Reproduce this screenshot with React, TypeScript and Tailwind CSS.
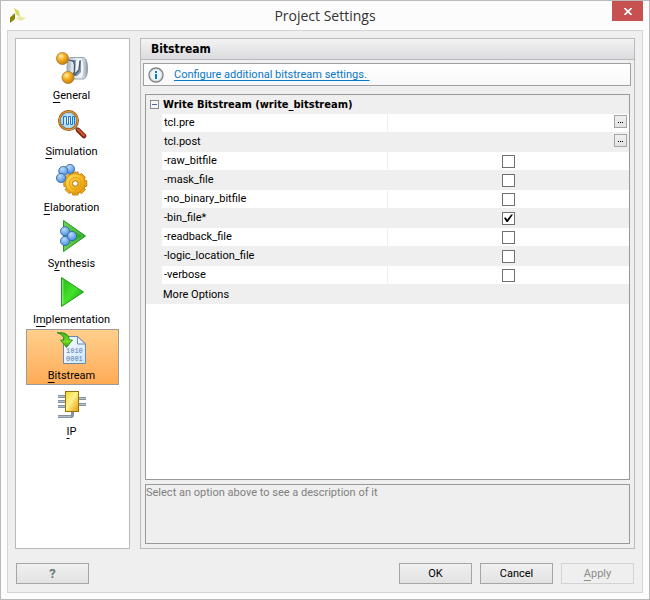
import { useState, type ReactNode } from 'react';

function GeneralIcon() {
  return (
    <svg viewBox="0 0 32 32" className="size-8" aria-hidden="true">
      <defs>
        <radialGradient id="orb" cx="0.38" cy="0.32" r="0.7">
          <stop offset="0" stopColor="#fff0b0" />
          <stop offset="0.4" stopColor="#f8b62c" />
          <stop offset="1" stopColor="#c87804" />
        </radialGradient>
        <linearGradient id="steel" x1="0" x2="1" y1="0" y2="0">
          <stop offset="0" stopColor="#a9b7c3" />
          <stop offset="0.45" stopColor="#e3eaf0" />
          <stop offset="0.75" stopColor="#f4f7fa" />
          <stop offset="1" stopColor="#8494a3" />
        </linearGradient>
      </defs>
      <path d="M14 5.500H28Q31.500 8 31.500 16.500Q31.500 25 28 27H14Q11 24 11 16Q11 8 14 5.500z" fill="url(#steel)" stroke="#7f909f" strokeWidth="0.8" />
      <path d="M26 6Q28.500 10 28.500 16.500Q28.500 23 26 26.500" fill="none" stroke="#b3c0cb" />
      <path d="M16 8H25V20L21 24H16z" fill="#8595a4" />
      <path d="M20 8H23.500L22.500 18L19 21z" fill="#eef3f7" />
      <path d="M16.500 10V19L13.500 23" fill="none" stroke="#dfe7ee" strokeWidth="2.600" />
      <path d="M11 7.500L18 9.500V12M18.500 12V20.500L15.500 23M24 9L23 18L18 23.500" fill="none" stroke="#465868" strokeWidth="1.200" />
      <circle cx="6.500" cy="6.500" r="6" fill="url(#orb)" stroke="#a97420" strokeWidth="0.8" />
      <circle cx="12" cy="25.500" r="6" fill="url(#orb)" stroke="#a97420" strokeWidth="0.8" />
    </svg>
  );
}

function SimulationIcon() {
  return (
    <svg viewBox="0 0 32 32" className="size-8" aria-hidden="true">
      <defs>
        <radialGradient id="lens">
          <stop offset="0" stopColor="#f0fdff" />
          <stop offset="1" stopColor="#8ccdf5" />
        </radialGradient>
      </defs>
      <path d="M19 19L23 23" stroke="#8995a0" strokeWidth="3" />
      <path d="M22 22L28 28" stroke="#7c2815" strokeWidth="4.600" strokeLinecap="round" />
      <path d="M22 21.500L28 27.500" stroke="#cf5734" strokeWidth="2" strokeLinecap="round" />
      <circle cx="12.500" cy="12.500" r="9.200" fill="url(#lens)" stroke="#8e551b" strokeWidth="2.600" />
      <circle cx="12.500" cy="12.500" r="9.200" fill="none" stroke="#de9538" strokeWidth="1.200" />
      <path d="M6 16.500H7.500V8.500H10.500V16.500H12.500V8.500H14.500V16.500H16.500V8.500H18.500V16.500" fill="none" stroke="#2875bd" strokeWidth="1" />
    </svg>
  );
}

const TEETH = [0, 45, 90, 135, 180, 225, 270, 315];

function ElaborationIcon() {
  return (
    <svg viewBox="0 0 32 32" className="size-8" aria-hidden="true">
      <defs>
        <radialGradient id="bead" cx="0.4" cy="0.3" r="0.75">
          <stop offset="0" stopColor="#b9dcff" />
          <stop offset="1" stopColor="#4589dc" />
        </radialGradient>
        <linearGradient id="gold" x1="0" x2="1" y1="0" y2="1">
          <stop offset="0" stopColor="#ffe36a" />
          <stop offset="0.5" stopColor="#f8bd22" />
          <stop offset="1" stopColor="#dd8e05" />
        </linearGradient>
      </defs>
      {TEETH.map((angle) => (
        <path key={angle} d="M15.800 11L16.600 8H22L22.800 11z" transform={`rotate(${angle} 19.300 19.500)`} fill="#f2ae18" stroke="#b87408" strokeWidth="0.8" />
      ))}
      <circle cx="19.300" cy="19.500" r="9.800" fill="url(#gold)" stroke="#c7810b" strokeWidth="0.6" />
      <circle cx="19.300" cy="19.500" r="6" fill="none" stroke="#e3a01a" strokeWidth="1" />
      <circle cx="19.300" cy="19.500" r="2.800" fill="#fff" stroke="#ae6d08" />
      <g fill="url(#bead)" stroke="#315f98" strokeWidth="0.8">
        <circle cx="14" cy="5" r="4.600" />
        <circle cx="7.300" cy="7" r="4.600" />
        <circle cx="5" cy="14" r="4.600" />
      </g>
    </svg>
  );
}

function SynthesisIcon() {
  return (
    <svg viewBox="0 0 32 32" className="size-8" aria-hidden="true">
      <defs>
        <linearGradient id="synthGreen" x1="0" x2="1">
          <stop offset="0" stopColor="#6fd055" />
          <stop offset="1" stopColor="#12a00b" />
        </linearGradient>
      </defs>
      <path d="M7.500 0.500L29.500 16L7.500 31.500z" fill="url(#synthGreen)" stroke="#249a1f" strokeLinejoin="round" />
      <path d="M9 3.500L27 16L9 28.500" fill="none" stroke="#7fd46c" strokeWidth="0.7" />
      <g fill="url(#bead)" stroke="#2c66a5" strokeWidth="0.8">
        <circle cx="9" cy="11.300" r="4.600" />
        <circle cx="9" cy="21" r="4.600" />
        <circle cx="16" cy="16" r="4.600" />
      </g>
    </svg>
  );
}

function ImplementationIcon() {
  return (
    <svg viewBox="0 0 32 32" className="size-8" aria-hidden="true">
      <defs>
        <linearGradient id="runGreen" x1="0" x2="1" y1="0" y2="1">
          <stop offset="0" stopColor="#25b916" />
          <stop offset="0.5" stopColor="#43e22b" />
          <stop offset="1" stopColor="#119709" />
        </linearGradient>
      </defs>
      <path d="M5.500 1.500L27.500 16L5.500 30.500z" fill="url(#runGreen)" stroke="#239a1d" strokeLinejoin="round" />
      <path d="M6.800 28V3.500" stroke="#9af08a" />
    </svg>
  );
}

function BitstreamIcon() {
  return (
    <svg viewBox="0 0 32 32" className="size-8" aria-hidden="true">
      <defs>
        <linearGradient id="page" x1="0" x2="1" y1="0" y2="1">
          <stop offset="0" stopColor="#fff" />
          <stop offset="1" stopColor="#c9e5fb" />
        </linearGradient>
        <linearGradient id="arrowGreen" x1="0" x2="0" y1="0" y2="1">
          <stop offset="0" stopColor="#36b51f" />
          <stop offset="0.6" stopColor="#75dc22" />
          <stop offset="1" stopColor="#29980d" />
        </linearGradient>
      </defs>
      <path d="M7.500 4.500H21.500L29.500 12V31.500H7.500z" fill="url(#page)" stroke="#6d87b0" />
      <path d="M21.500 4.500V12H29.500z" fill="#e9f5ff" stroke="#6d87b0" strokeLinejoin="round" />
      <text x="10" y="21" fontSize="7" fontFamily="Liberation Mono, monospace" fill="#4f74b0">1010</text>
      <text x="10" y="29" fontSize="7" fontFamily="Liberation Mono, monospace" fill="#4f74b0">0001</text>
      <path d="M1 0.700Q13 -0.500 13.500 8H16.500L10.500 15.500L4.500 8H8Q8 2.500 1 0.700z" fill="url(#arrowGreen)" stroke="#258311" strokeWidth="0.8" strokeLinejoin="round" />
    </svg>
  );
}

function IpIcon() {
  return (
    <svg viewBox="0 0 32 32" className="size-8" aria-hidden="true">
      <defs>
        <linearGradient id="chip" x1="0" x2="1" y1="0" y2="1">
          <stop offset="0" stopColor="#f1d12c" />
          <stop offset="0.45" stopColor="#fff28a" />
          <stop offset="1" stopColor="#e79b08" />
        </linearGradient>
      </defs>
      <path d="M2 8.500H9M2 13.500H9M2 18.500H9M23 10.500H30M23 16.500H30M2 28.500H15Q16.500 28.500 16.500 27V24" fill="none" stroke="#8491a0" strokeWidth="3" />
      <path d="M2 8.500H9M2 13.500H9M2 18.500H9M23 10.500H30M23 16.500H30M2 28.500H15" fill="none" stroke="#b4c0cb" strokeWidth="1" />
      <rect x="9.500" y="3.500" width="13" height="20" fill="url(#chip)" stroke="#9a710f" />
    </svg>
  );
}

function InfoIcon() {
  return (
    <svg viewBox="0 0 16 16" className="size-4" aria-hidden="true">
      <circle cx="8" cy="8" r="7" fill="#fff" stroke="#7d8083" strokeWidth="1.400" />
      <circle cx="8" cy="8" r="5.800" fill="#eef5fa" stroke="#cfd5d9" strokeWidth="0.8" />
      <path d="M7 4H9V6H7zM7 7H9V12H7z" fill="#0878c8" />
    </svg>
  );
}

function LogoIcon() {
  return (
    <svg viewBox="0 0 16 16" className="size-4" aria-hidden="true">
      <path d="M4 0L9 3L10 9L6 6z" fill="#d5db52" />
      <path d="M0 9.500L5 5V11L0 15z" fill="#878900" />
      <path d="M6 11L9 8L16 10L11 13z" fill="#e6eaa5" />
    </svg>
  );
}

interface Category {
  id: string;
  label: ReactNode;
  icon: ReactNode;
}

const CATEGORIES: Category[] = [
  { id: 'general', label: <Mnemonic text="General" at={0} />, icon: <GeneralIcon /> },
  { id: 'simulation', label: <Mnemonic text="Simulation" at={0} />, icon: <SimulationIcon /> },
  { id: 'elaboration', label: <Mnemonic text="Elaboration" at={0} />, icon: <ElaborationIcon /> },
  { id: 'synthesis', label: <Mnemonic text="Synthesis" at={1} />, icon: <SynthesisIcon /> },
  { id: 'implementation', label: <Mnemonic text="Implementation" at={1} />, icon: <ImplementationIcon /> },
  { id: 'bitstream', label: <Mnemonic text="Bitstream" at={0} />, icon: <BitstreamIcon /> },
  { id: 'ip', label: <Mnemonic text="IP" at={0} />, icon: <IpIcon /> },
];

const OPTIONS = [
  { name: 'tcl.pre', kind: 'file' },
  { name: 'tcl.post', kind: 'file' },
  { name: '-raw_bitfile', kind: 'flag' },
  { name: '-mask_file', kind: 'flag' },
  { name: '-no_binary_bitfile', kind: 'flag' },
  { name: '-bin_file*', kind: 'flag' },
  { name: '-readback_file', kind: 'flag' },
  { name: '-logic_location_file', kind: 'flag' },
  { name: '-verbose', kind: 'flag' },
];

// Underlines the keyboard shortcut letter
function Mnemonic({ text, at }: { text: string; at: number }) {
  return (
    <span>
      {text.slice(0, at)}
      <span className="underline decoration-1 underline-offset-3 [text-decoration-skip-ink:none]">{text[at]}</span>
      {text.slice(at + 1)}
    </span>
  );
}

const BUTTON =
  'h-[21px] w-[73px] border border-[#a5a5a5] bg-linear-to-b from-[#f0f0f0] to-[#e2e2e2] disabled:border-[#d3d3d3] disabled:bg-none disabled:text-[#8c8c8c]';

export default function App() {
  const [selected, setSelected] = useState('bitstream');
  const [flags, setFlags] = useState<string[]>(['-bin_file*']);
  const [expanded, setExpanded] = useState(true);

  const toggleFlag = (name: string) =>
    setFlags((prev) => (prev.includes(name) ? prev.filter((f) => f !== name) : [...prev, name]));

  return (
    <div className="flex min-h-screen flex-col border border-[#bababa] bg-[#fcfcfc] px-1.5 pb-1.5 font-['Roboto',sans-serif] text-[11px] leading-4 text-black">
      {/* Title bar */}
      <header className="grid h-[29px] shrink-0 grid-cols-[1fr_auto_1fr] items-center">
        <div className="pl-[3px]">
          <LogoIcon />
        </div>
        <h1 className="font-['Open_Sans',sans-serif] text-[14px] text-[#333]">Project Settings</h1>
        <button aria-label="Close" className="flex h-5 w-[31px] items-center justify-center self-start justify-self-end bg-[#c75050]">
          <svg viewBox="0 0 8 7" className="h-[7px] w-2" aria-hidden="true">
            <path d="M0.500 0L7.500 7M7.500 0L0.500 7" stroke="#fff" strokeWidth="1.700" />
          </svg>
        </button>
      </header>

      <main className="flex flex-1 flex-col border border-[#d4d4d4] bg-[#efefef] px-[7px] pt-[7px] pb-2">
        <div className="flex flex-1 gap-2.5">
          {/* Categories */}
          <nav className="flex w-[115px] shrink-0 flex-col border border-[#bababa] bg-white px-2.5 py-2.5">
            {CATEGORIES.map((c) => (
              <button
                key={c.id}
                onClick={() => setSelected(c.id)}
                className={`flex h-14 flex-col items-center border pt-0.5 pr-0.5 ${
                  c.id === selected ? 'border-[#9b9b9b] bg-linear-to-b from-[#ffcf8b] to-[#ffab55]' : 'border-transparent'
                }`}
              >
                {c.icon}
                <span className="mt-1">{c.label}</span>
              </button>
            ))}
          </nav>

          {/* Settings panel */}
          <section className="flex min-w-0 flex-1 flex-col border border-[#bababa]">
            <h2 className="h-[21px] border-b border-[#bababa] bg-linear-to-b from-[#f3f3f3] to-[#dcdce0] pl-2.5 font-['DejaVu_Sans_Condensed','DejaVu_Sans',sans-serif] text-[12px] leading-5 font-bold">
              Bitstream
            </h2>
            <div className="mt-[3px] mr-[3px] ml-0.5 flex h-[23px] shrink-0 items-center gap-2.5 border border-[#a0a0a0] bg-linear-to-b from-white to-[#f8f8f8] pl-1">
              <InfoIcon />
              <a href="#bitstream" className="whitespace-pre text-[#0878c8] underline underline-offset-2 [text-decoration-skip-ink:none]">
                {'Configure additional bitstream settings. '}
              </a>
            </div>

            <div className="mx-1 mt-2 flex-1 border border-[#999] bg-white">
              <table className="w-full table-fixed border-separate border-spacing-0">
                <colgroup>
                  <col className="w-4" />
                  <col className="w-[226px]" />
                  <col />
                </colgroup>
                <thead className="bg-[#efefef]">
                  <tr className="h-[19px]">
                    <td className="p-0 pl-1">
                      <button
                        aria-label="Toggle group"
                        aria-expanded={expanded}
                        onClick={() => setExpanded(!expanded)}
                        className="flex size-[9px] items-center justify-center border border-[#8b8b8b] bg-[#f7f7f7]"
                      >
                        <span className="h-px w-[5px] bg-[#4763a5]" />
                      </button>
                    </td>
                    <th colSpan={2} scope="colgroup" className="p-0 pl-px text-left font-['DejaVu_Sans_Condensed','DejaVu_Sans',sans-serif] text-[11px] font-bold">
                      Write Bitstream (write_bitstream)
                    </th>
                  </tr>
                </thead>
                {expanded && (
                  <tbody>
                    {OPTIONS.map((option) => (
                      <tr key={option.name} className="group h-[19px] bg-[#efefef]">
                        <td className="p-0" />
                        <td className="border-r border-b border-[#efefef] p-0 pl-0.5 group-odd:bg-white">
                          <label htmlFor={option.name} className="block h-[18px] leading-[18px]">
                            {option.name}
                          </label>
                        </td>
                        <td className="border-b border-[#efefef] p-0 group-odd:bg-white">
                          {option.kind === 'file' ? (
                            <div className="flex h-[18px] justify-end pt-px pr-0.5">
                              <button id={option.name} className="flex size-[13px] items-center justify-center gap-px border border-[#a5a5a5] bg-linear-to-b from-[#f0f0f0] to-[#e2e2e2] pt-px">
                                <span className="size-px bg-black" />
                                <span className="size-px bg-black" />
                                <span className="size-px bg-black" />
                              </button>
                            </div>
                          ) : (
                            <div className="grid h-[18px] place-items-center pt-px">
                              <input
                                id={option.name}
                                type="checkbox"
                                checked={flags.includes(option.name)}
                                onChange={() => toggleFlag(option.name)}
                                className="peer col-start-1 row-start-1 size-[13px] appearance-none border border-[#707070] bg-white"
                              />
                              <svg viewBox="0 0 9 9" className="pointer-events-none invisible col-start-1 row-start-1 size-[9px] peer-checked:visible" aria-hidden="true">
                                <path d="M0 4L1.500 3.200L3.200 5.500L7.200 0.500H9L3.800 8H2.500z" fill="#000" />
                              </svg>
                            </div>
                          )}
                        </td>
                      </tr>
                    ))}
                    <tr className="h-[19px] bg-[#efefef]">
                      <td className="p-0" />
                      <td colSpan={2} className="p-0 pl-px">
                        More Options
                      </td>
                    </tr>
                  </tbody>
                )}
              </table>
            </div>

            <p className="mx-1 mt-1 mb-1 h-[60px] shrink-0 border border-[#999] text-[#808080]">
              Select an option above to see a description of it
            </p>
          </section>
        </div>

        {/* Dialog buttons */}
        <footer className="mt-3.5 flex gap-2 px-px">
          <button className={`${BUTTON} mr-auto text-[13px] font-bold text-[#667777]`}>?</button>
          <button className={BUTTON}>OK</button>
          <button className={BUTTON}>Cancel</button>
          <button className={BUTTON} disabled>
            <Mnemonic text="Apply" at={0} />
          </button>
        </footer>
      </main>
    </div>
  );
}
